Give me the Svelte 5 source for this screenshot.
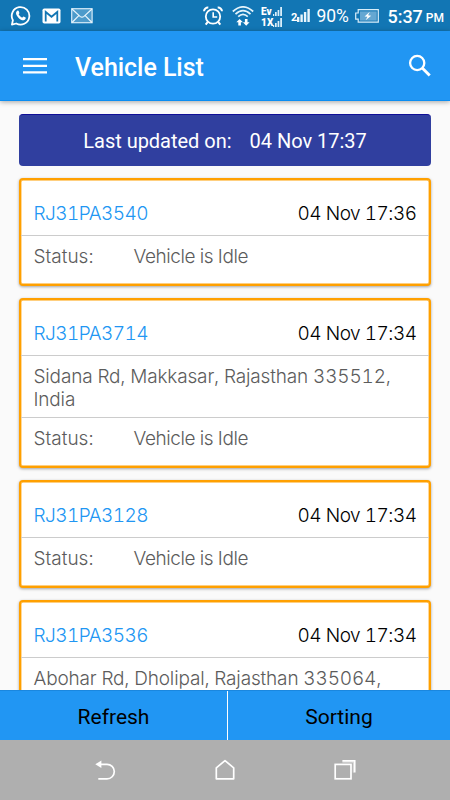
<script lang="ts">
	const updated = '04 Nov 17:37';

	const vehicles = [
		{ plate: 'RJ31PA3540', time: '04 Nov 17:36', address: '', status: 'Vehicle is Idle' },
		{ plate: 'RJ31PA3714', time: '04 Nov 17:34', address: 'Sidana Rd, Makkasar, Rajasthan 335512, India', status: 'Vehicle is Idle' },
		{ plate: 'RJ31PA3128', time: '04 Nov 17:34', address: '', status: 'Vehicle is Idle' },
		{ plate: 'RJ31PA3536', time: '04 Nov 17:34', address: 'Abohar Rd, Dholipal, Rajasthan 335064,', status: '' },
	];
</script>

<div class="screen">

	<!-- System status bar -->
	<div class="status-bar">
		<svg class="whatsapp" width="22" height="22" viewBox="0 0 22 22">
			<path d="M2.9 15.2 A8.8 8.8 0 1 1 6.2 18.5 L1.9 19.6 Z" fill="none" stroke="#fff" stroke-width="1.8" stroke-linejoin="round"/>
			<path d="M7.3 5.7 C8.1 5.3 8.6 5.7 8.9 6.6 L9.4 7.9 C9.5 8.4 8.8 8.9 8.6 9.3 C9.4 10.9 10.6 12 12.2 12.7 C12.7 12.4 13.1 11.5 13.6 11.6 L15.6 12.6 C16.2 13 15.3 15.1 13.7 15.3 C10.5 15.6 6.3 11.2 6 8.2 C6 7.1 6.6 6.1 7.3 5.7 Z" fill="#fff"/>
		</svg>
		<svg class="gmail" width="19" height="16" viewBox="0 0 19 16">
			<rect x="0.5" y="0.5" width="18" height="15" rx="1.8" fill="#fff"/>
			<path d="M3.7 13.6 V4 L9.5 8.8 L15.3 4 V13.6" fill="none" stroke="#1276b4" stroke-width="1.8"/>
			<path d="M4 1.3 H15 L9.5 5.6 Z" fill="#fff"/>
		</svg>
		<svg class="mail" width="22" height="16" viewBox="0 0 22 16">
			<rect x="0.7" y="0.7" width="20.4" height="14" fill="#4d9bcb" stroke="#d5ebf8" stroke-width="1.2"/>
			<path d="M1 1 L9 8.4 Q11 10 13 8.4 L21 1 M1 14.5 L7.8 7.6 M21 14.5 L14.2 7.6" fill="none" stroke="#e8f5fc" stroke-width="1.2"/>
		</svg>

		<div class="system">
			<svg class="alarm" width="20" height="20" viewBox="0 0 20 20" fill="none" stroke="#fff">
				<circle cx="10" cy="10.5" r="7.2" stroke-width="1.8"/>
				<path d="M10.2 6.2 V11 H14.2" stroke-width="1.6"/>
				<path d="M1 5.2 A4 4 0 0 1 5.3 1.5 M14.7 1.5 A4 4 0 0 1 19 5.2 M4.8 15.8 L2.7 18.7 M15.2 15.8 L17.3 18.7" stroke-width="2"/>
			</svg>
			<svg class="wifi" width="22" height="21" viewBox="0 0 22 21">
				<g fill="none" stroke="#e4f3fb" stroke-width="1.7">
					<path d="M0.8 5.5 Q11 -3.8 21.2 5.5"/>
					<path d="M3.5 8.2 Q11 1.2 18.5 8.2"/>
					<path d="M6.2 10.7 Q11 6.1 15.8 10.7"/>
				</g>
				<path d="M7.6 13 L11 16.2 H8.9 V19.6 H6.3 V16.2 H4.3 Z M12.9 13 H15.5 V16.3 H17.6 L14.2 19.7 L10.9 16.3 H12.9 Z" fill="#fff"/>
			</svg>
			<div class="carrier">
				<div class="net"><span>Ev</span>
					<svg width="9" height="9" viewBox="0 0 9 9" fill="#d9eefa"><path d="M0 7h1.2v2H0zM2 5h1.7v4H2zM4.6 3h1.7v6H4.6zM7.2 0h1.8v9H7.2z"/></svg>
				</div>
				<div class="net"><span>1X</span>
					<svg width="9" height="9" viewBox="0 0 9 9" fill="#d9eefa"><path d="M0 7h1.2v2H0zM2 5h1.7v4H2zM4.6 3h1.7v6H4.6zM7.2 0h1.8v9H7.2z"/></svg>
				</div>
			</div>
			<div class="sim">
				<span>2</span>
				<svg width="13" height="13" viewBox="0 0 13 13" fill="#e8f5fc"><path d="M0 8h2.4v5H0zM3.4 5.5h2.4V13H3.4zM6.9 3h2.4v10H6.9zM10.4 0h2.4v13h-2.4z"/></svg>
			</div>
			<span class="percent">90%</span>
			<svg class="battery" width="24" height="14" viewBox="0 0 24 14">
				<path d="M3.2 0.7 H23.3 V13.2 H3.2 V10.2 H0.7 V4 H3.2 Z" fill="none" stroke="#d9eefa" stroke-width="1.2"/>
				<rect x="5" y="2.4" width="16.7" height="9.2" fill="#65a7d2"/>
				<path d="M14.8 2.8 L9.6 7.6 L12.5 7.8 L10.6 11.2 L16.2 6.7 L13.1 6.2 Z" fill="#fff"/>
			</svg>
			<span class="clock">5:37</span><span class="ampm">PM</span>
		</div>
	</div>

	<header class="app-bar">
		<svg class="menu" width="24" height="18" viewBox="0 0 24 18" fill="#fff"><path d="M0 1h24v2.2H0zM0 7.8h24V10H0zM0 14.2h24v2.4H0z"/></svg>
		<h1>Vehicle List</h1>
		<svg class="search" width="24" height="24" viewBox="0 0 24 24" fill="none" stroke="#fff">
			<circle cx="9.2" cy="9" r="7.1" stroke-width="2.3"/>
			<path d="M14.2 14 L21.7 21.5" stroke-width="2.9"/>
		</svg>
	</header>

	<main class="list">
		<div class="banner"><span>Last updated on:</span><span>{updated}</span></div>

		{#each vehicles as v}
			<article class="card">
				<div class="head">
					<span class="plate">{v.plate}</span>
					<span class="time">{v.time}</span>
				</div>
				{#if v.address}
					<p class="address">{v.address}</p>
				{/if}
				{#if v.status}
					<div class="state">
						<span class="label">Status:</span>
						<span class="value">{v.status}</span>
					</div>
				{/if}
			</article>
		{/each}
	</main>

	<div class="actions">
		<button>Refresh</button>
		<button>Sorting</button>
	</div>

	<!-- Android navigation keys -->
	<nav class="keys">
		<svg width="24" height="22" viewBox="0 0 24 22">
			<path d="M5 5.3 H14 A7.3 7.3 0 0 1 14 19.9 H5.3" fill="none" stroke="#fff" stroke-width="1.7"/>
			<path d="M2.3 5.3 L8.4 1.5 V9 Z" fill="#fff"/>
		</svg>
		<svg width="24" height="22" viewBox="0 0 24 22" fill="none" stroke="#fff" stroke-width="1.7">
			<path d="M3.3 19.8 V8.8 L12 1.6 L20.7 8.8 V19.8 Z" stroke-linejoin="round"/>
		</svg>
		<svg width="24" height="22" viewBox="0 0 24 22" fill="none" stroke="#fff" stroke-width="1.7">
			<rect x="2.2" y="5.4" width="15.8" height="14.4"/>
			<path d="M9.4 1.8 H21.7 V13.6"/>
			<path d="M9.4 3.1 H20.3 V13.6" stroke-width="1" opacity="0.6"/>
		</svg>
	</nav>
</div>

<style>
	:global(body) { margin: 0; }

	.screen {
		width: 450px;
		height: 800px;
		display: flex;
		flex-direction: column;
		overflow: hidden;
		background: #fafafa;
		font-family: Roboto, sans-serif;
	}
	svg { display: block; flex: none; }

	/* Status bar */
	.status-bar {
		flex: none;
		height: 31px;
		display: flex;
		align-items: center;
		padding: 0 7px 0 10px;
		box-sizing: border-box;
		background: #1276b4;
		color: #fff;
	}
	.gmail { margin-left: 10px; }
	.mail { margin-left: 10px; }
	.system {
		margin-left: auto;
		display: flex;
		align-items: center;
	}
	.wifi { margin: 2px 0 0 9px; }
	.carrier { margin: 0 0 0 7px; width: 21px; }
	.net {
		display: flex;
		align-items: flex-end;
		justify-content: space-between;
		height: 11.5px;
		font-size: 10px;
		font-weight: 900;
		line-height: 9px;
	}
	.sim {
		display: flex;
		align-items: flex-end;
		margin-left: 9px;
		font-size: 11px;
		font-weight: 700;
		line-height: 9px;
	}
	.percent { margin-left: 6px; font-size: 17.5px; line-height: 31px; padding-top: 2px; }
	.battery { margin-left: 6px; }
	.clock { margin-left: 8.5px; font-size: 18px; font-weight: 500; line-height: 31px; padding-top: 1px; }
	.ampm { margin: 5px -1px 0 3px; font-size: 12px; font-weight: 500; }

	/* App bar */
	.app-bar {
		position: relative;
		z-index: 1;
		flex: none;
		height: 70px;
		display: flex;
		align-items: center;
		padding: 0 18px 0 23px;
		box-sizing: border-box;
		background: #2196f3;
		border-bottom: 1px solid #0a8df2;
		box-shadow: 0 1px 5px rgba(0,0,0,0.35);
	}
	h1 {
		margin: 3px 0 0 28px;
		color: #fff;
		font-size: 25px;
		font-weight: 500;
		letter-spacing: -0.05px;
	}
	.search { margin-left: auto; }

	/* Vehicle list */
	.list {
		flex: 1;
		min-height: 0;
		overflow: hidden;
		padding: 13px 19px 0;
		display: flex;
		flex-direction: column;
		gap: 12.2px;
	}
	.banner {
		flex: none;
		height: 52px;
		display: flex;
		align-items: center;
		justify-content: center;
		gap: 18px;
		padding-top: 1px;
		box-sizing: border-box;
		border-radius: 4px;
		background: #303f9f;
		border-top: 1px solid #100f96;
		color: #fff;
		font-size: 20px;
		letter-spacing: -0.02px;
	}
	.card {
		flex: none;
		border: 2px solid #ffa000;
		border-radius: 4px;
		background: #fff;
		box-shadow: inset 0 0 0 0.4px #ffa000, 0 1px 3px rgba(0,0,0,0.35);
		font-family: Inter, "Liberation Sans", sans-serif;
		font-size: 19px;
		font-weight: 300;
		font-variant-numeric: tabular-nums;
		color: #5c5c5c;
	}
	.head {
		height: 55px;
		display: flex;
		justify-content: space-between;
		padding: 22px 12.5px 0 12.5px;
		box-sizing: border-box;
		line-height: 24px;
	}
	.plate { color: #2196f3; letter-spacing: -0.53px; }
	.time { color: #000; letter-spacing: -0.5px; }
	.address {
		margin: 0;
		height: 62.5px;
		padding: 9px 10px 0 12.5px;
		box-sizing: border-box;
		border-top: 1px solid #ccc;
		line-height: 23px;
		letter-spacing: -0.16px;
	}
	.state {
		height: 48.5px;
		display: flex;
		padding: 9px 13px 0 12.5px;
		box-sizing: border-box;
		border-top: 1px solid #ccc;
		line-height: 23px;
	}
	.label { width: 100px; }
	.value { letter-spacing: -0.42px; }

	/* Bottom actions */
	.actions {
		flex: none;
		height: 50px;
		display: grid;
		grid-template-columns: 227px 1fr;
		background: #2196f3;
		border-top: 1px solid #1a87df;
		box-sizing: border-box;
	}
	button {
		padding: 3px 0 0;
		border: 0;
		background: none;
		color: #000;
		font: 400 21px Roboto, sans-serif;
	}
	button + button { border-left: 1px solid #fff; }

	.keys {
		flex: none;
		height: 60px;
		display: flex;
		align-items: center;
		justify-content: center;
		gap: 96px;
		background: #afafaf;
	}
</style>
